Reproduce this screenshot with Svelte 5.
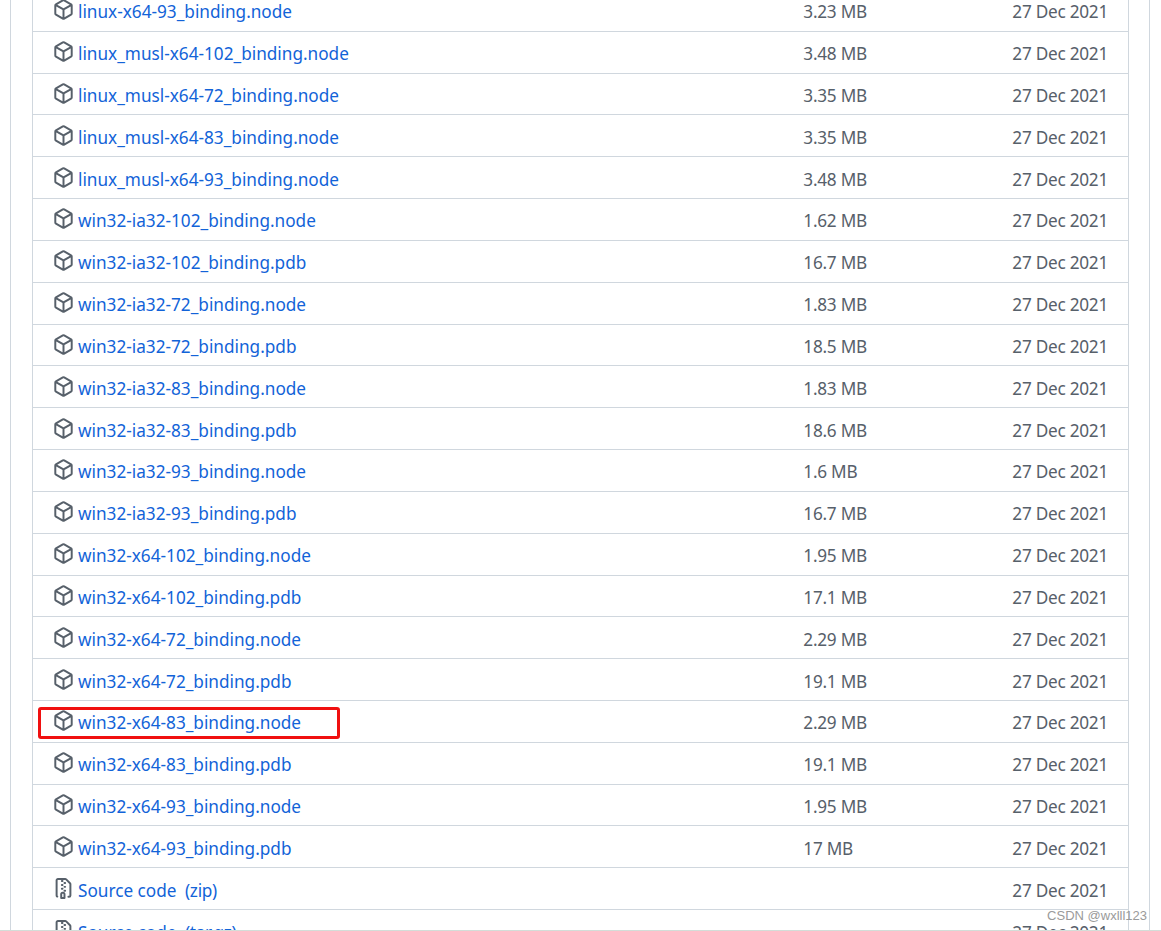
<script lang="ts">
	const assets = [
		["linux-x64-93_binding.node", "3.23 MB"],
		["linux_musl-x64-102_binding.node", "3.48 MB"],
		["linux_musl-x64-72_binding.node", "3.35 MB"],
		["linux_musl-x64-83_binding.node", "3.35 MB"],
		["linux_musl-x64-93_binding.node", "3.48 MB"],
		["win32-ia32-102_binding.node", "1.62 MB"],
		["win32-ia32-102_binding.pdb", "16.7 MB"],
		["win32-ia32-72_binding.node", "1.83 MB"],
		["win32-ia32-72_binding.pdb", "18.5 MB"],
		["win32-ia32-83_binding.node", "1.83 MB"],
		["win32-ia32-83_binding.pdb", "18.6 MB"],
		["win32-ia32-93_binding.node", "1.6 MB"],
		["win32-ia32-93_binding.pdb", "16.7 MB"],
		["win32-x64-102_binding.node", "1.95 MB"],
		["win32-x64-102_binding.pdb", "17.1 MB"],
		["win32-x64-72_binding.node", "2.29 MB"],
		["win32-x64-72_binding.pdb", "19.1 MB"],
		["win32-x64-83_binding.node", "2.29 MB"],
		["win32-x64-83_binding.pdb", "19.1 MB"],
		["win32-x64-93_binding.node", "1.95 MB"],
		["win32-x64-93_binding.pdb", "17 MB"]
	];
	const sources = ["zip", "tar.gz"];
	const highlighted = "win32-x64-83_binding.node";
</script>

{#snippet packageIcon()}
	<svg class="icon" viewBox="0 0 16 16" aria-hidden="true">
		<path fill-rule="evenodd" d="M8.878.392a1.75 1.75 0 0 0-1.756 0l-5.25 3.045A1.75 1.75 0 0 0 1 4.951v6.098c0 .624.332 1.2.872 1.514l5.25 3.045a1.75 1.75 0 0 0 1.756 0l5.25-3.045c.54-.313.872-.89.872-1.514V4.951c0-.624-.332-1.2-.872-1.514L8.878.392ZM7.875 1.69a.25.25 0 0 1 .25 0l4.63 2.685L8 7.133 3.245 4.375l4.63-2.685ZM2.5 5.677v5.372c0 .09.047.171.125.216l4.625 2.683V8.432Zm6.25 8.271 4.625-2.683a.25.25 0 0 0 .125-.216V5.677L8.75 8.432Z" />
	</svg>
{/snippet}

{#snippet zipIcon()}
	<svg class="icon" viewBox="0 0 16 16" aria-hidden="true">
		<path fill-rule="evenodd" d="M3.5 1.75v11.5c0 .09.048.173.126.217a.75.75 0 0 1-.752 1.298A1.748 1.748 0 0 1 2 13.25V1.75C2 .784 2.784 0 3.75 0h5.586c.464 0 .909.185 1.237.513l2.914 2.914c.329.328.513.773.513 1.237v8.586A1.75 1.75 0 0 1 12.25 15h-.5a.75.75 0 0 1 0-1.5h.5a.25.25 0 0 0 .25-.25V4.664a.25.25 0 0 0-.073-.177L9.513 1.573a.25.25 0 0 0-.177-.073H7.25a.75.75 0 0 1 0 1.5h-.5a.75.75 0 0 1 0-1.5h-3a.25.25 0 0 0-.25.25Zm3.75 8.75h.5c.966 0 1.75.784 1.75 1.75v3a.75.75 0 0 1-.75.75h-2.5a.75.75 0 0 1-.75-.75v-3c0-.966.784-1.75 1.75-1.75ZM6 5.25a.75.75 0 0 1 .75-.75h.5a.75.75 0 0 1 0 1.5h-.5A.75.75 0 0 1 6 5.25Zm.75 2.25h.5a.75.75 0 0 1 0 1.5h-.5a.75.75 0 0 1 0-1.5ZM8 6.75A.75.75 0 0 1 8.75 6h.5a.75.75 0 0 1 0 1.5h-.5A.75.75 0 0 1 8 6.75ZM8.75 3h.5a.75.75 0 0 1 0 1.5h-.5a.75.75 0 0 1 0-1.5ZM8 9.75A.75.75 0 0 1 8.75 9h.5a.75.75 0 0 1 0 1.5h-.5A.75.75 0 0 1 8 9.75Zm-1 2.5v2.25h1v-2.25a.25.25 0 0 0-.25-.25h-.5a.25.25 0 0 0-.25.25Z" />
	</svg>
{/snippet}

<div class="page">
	<div class="release">
		<ul class="assets">
			{#each assets as [name, size]}
				<li class="row">
					<span class="name">
						{#if name === highlighted}<span class="mark"></span>{/if}
						{@render packageIcon()}
						<a href="#top">{name}</a>
					</span>
					<span class="size">{size}</span>
					<span class="date">27 Dec 2021</span>
				</li>
			{/each}
			{#each sources as ext}
				<li class="row">
					<span class="name">
						{@render zipIcon()}
						<a href="#top">Source code <span class="ext">({ext})</span></a>
					</span>
					<span class="size"></span>
					<span class="date">27 Dec 2021</span>
				</li>
			{/each}
		</ul>
	</div>
	<div class="watermark">CSDN @wxlll123</div>
	<div class="edge"></div>
</div>

<style>
	:global(body) {
		background: #fff;
		overflow: hidden;
	}

	.page {
		position: relative;
		height: 931px;
		overflow: hidden;
		font-family: "Noto Sans", "Open Sans", sans-serif;
		font-size: 17.2px;
	}

	.release {
		margin: 0 11px 0 10px;
		padding: 0 20px 0 21px;
		border-left: 1px solid #d0d7de;
		border-right: 1px solid #d0d7de;
	}

	.assets {
		list-style: none;
		margin: -10.1px 0 0;
		padding: 0;
		border-left: 1px solid #d0d7de;
		border-right: 1px solid #d0d7de;
	}

	.row {
		box-sizing: border-box;
		height: 41.84px;
		display: flex;
		align-items: center;
		padding: 3px 20px 0;
		border-bottom: 1px solid #d0d7de;
		color: #57606a;
	}

	.name {
		position: relative;
		flex: 1;
		display: flex;
		align-items: center;
		gap: 4px;
	}

	.mark {
		position: absolute;
		left: -15px;
		top: -4px;
		width: 296px;
		height: 26px;
		border: 3px solid #f01010;
		border-radius: 3px;
	}

	.icon {
		width: 21px;
		height: 21px;
		flex: none;
		fill: #57606a;
		margin-top: -4px;
	}

	a {
		color: #1263d8;
		text-decoration: none;
	}

	.ext {
		margin-left: 4px;
		letter-spacing: -0.3px;
	}

	.size {
		width: 209px;
		letter-spacing: -0.25px;
	}

	.date {
		white-space: nowrap;
		letter-spacing: -0.25px;
	}

	.watermark {
		position: absolute;
		right: 14px;
		top: 908px;
		font-family: "Liberation Sans", sans-serif;
		font-size: 13px;
		color: #9a9a9a;
	}

	.edge {
		position: absolute;
		left: 0;
		right: 0;
		bottom: 0;
		height: 1px;
		background: #d3ddd8;
	}
</style>
